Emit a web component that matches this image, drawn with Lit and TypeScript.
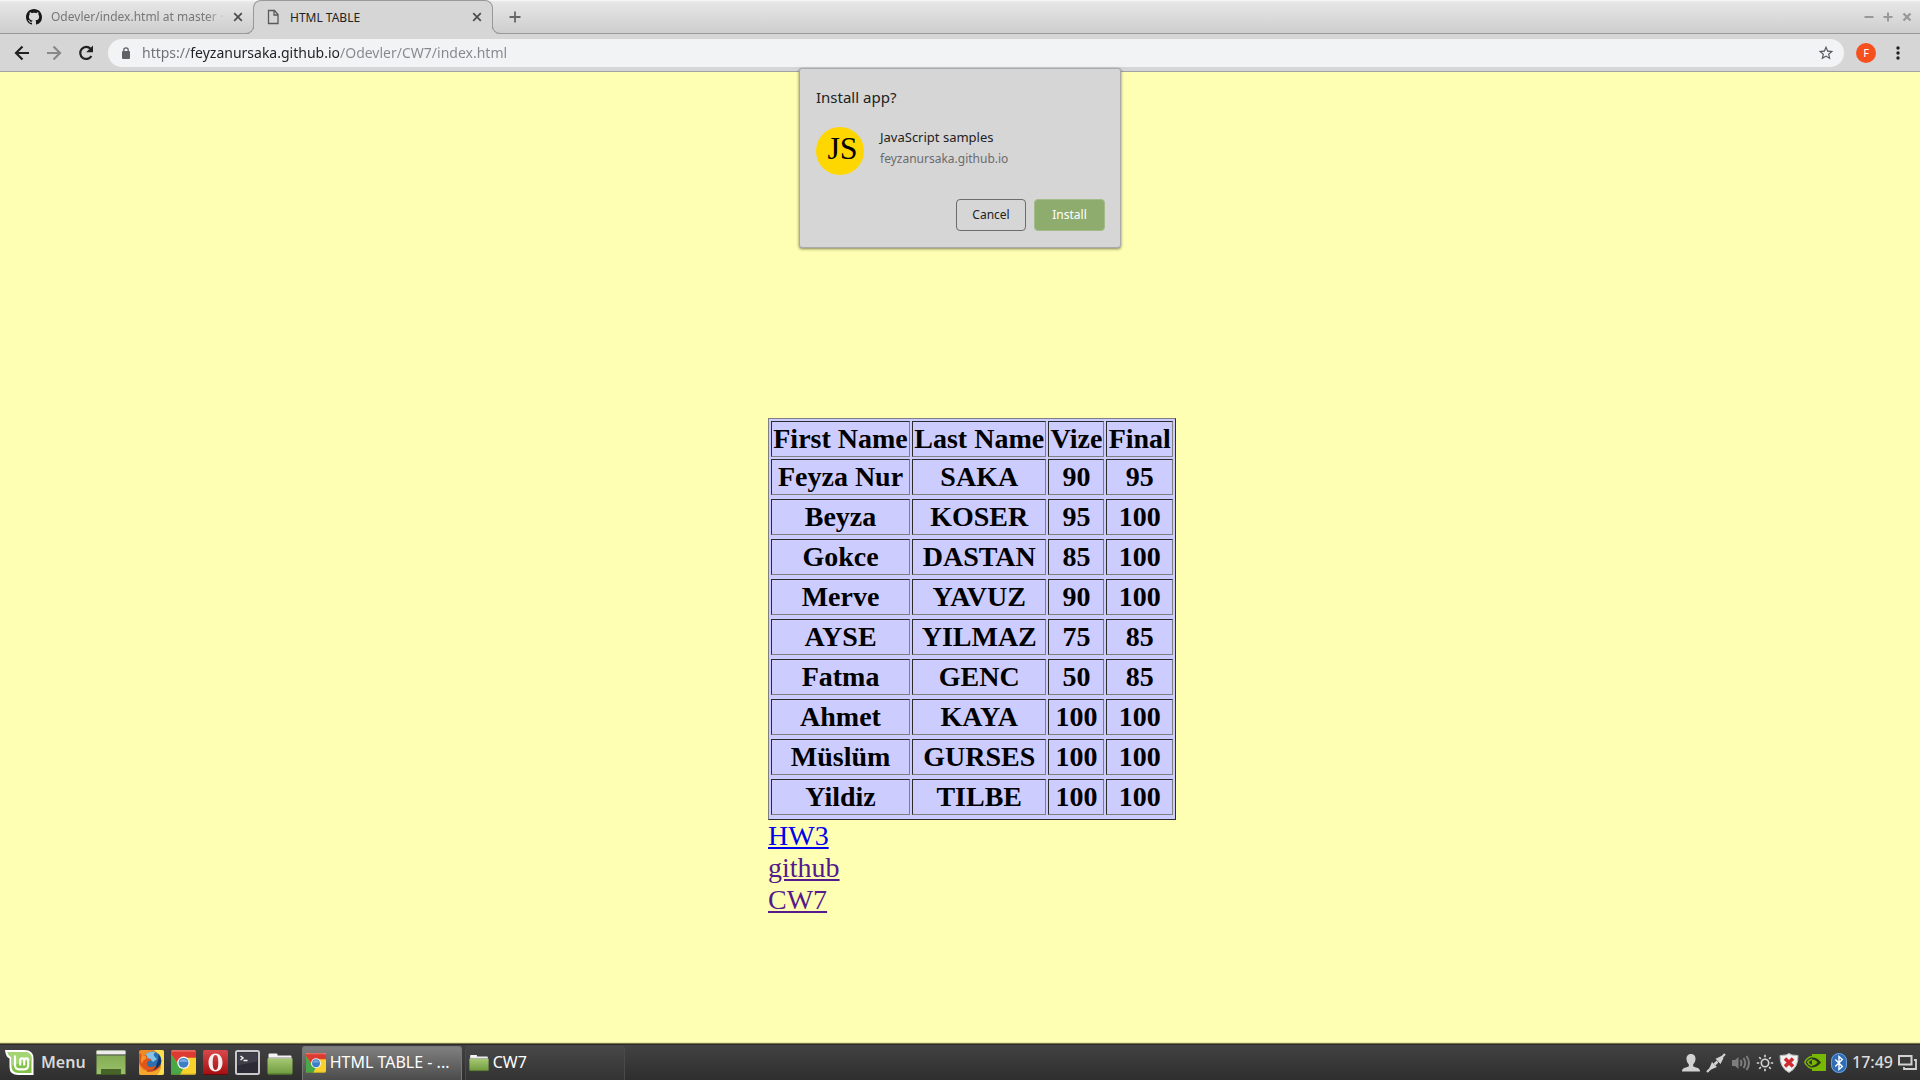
import { LitElement, html, css, svg } from "lit";
import { customElement } from "lit/decorators.js";

const students: Array<[string, string, number, number]> = [
  ["Feyza Nur", "SAKA", 90, 95],
  ["Beyza", "KOSER", 95, 100],
  ["Gokce", "DASTAN", 85, 100],
  ["Merve", "YAVUZ", 90, 100],
  ["AYSE", "YILMAZ", 75, 85],
  ["Fatma", "GENC", 50, 85],
  ["Ahmet", "KAYA", 100, 100],
  ["Müslüm", "GURSES", 100, 100],
  ["Yildiz", "TILBE", 100, 100],
];

const icon = (size: number, box: string, body: unknown, height = size) =>
  html`<svg width=${size} height=${height} viewBox=${box} aria-hidden="true">${body}</svg>`;

const cross = icon(10, "0 0 10 10", svg`<path d="M1.2 1.2 8.8 8.8M8.8 1.2 1.2 8.8" stroke="#4c4c4c" stroke-width="1.7" fill="none"/>`);

const octocat = icon(16, "0 0 16 16", svg`<path fill="#191717" d="M8 0C3.58 0 0 3.58 0 8c0 3.54 2.29 6.53 5.47 7.59.4.07.55-.17.55-.38 0-.19-.01-.82-.01-1.49-2.01.37-2.53-.49-2.69-.94-.09-.23-.48-.94-.82-1.13-.28-.15-.68-.52-.01-.53.63-.01 1.08.58 1.23.82.72 1.21 1.87.87 2.33.66.07-.52.28-.87.51-1.07-1.78-.2-3.64-.89-3.64-3.95 0-.87.31-1.59.82-2.15-.08-.2-.36-1.02.08-2.12 0 0 .67-.21 2.2.82.64-.18 1.32-.27 2-.27s1.36.09 2 .27c1.53-1.04 2.2-.82 2.2-.82.44 1.1.16 1.92.08 2.12.51.56.82 1.27.82 2.15 0 3.07-1.87 3.75-3.65 3.95.29.25.54.73.54 1.48 0 1.07-.01 1.93-.01 2.2 0 .21.15.46.55.38A8.01 8.01 0 0 0 16 8c0-4.42-3.58-8-8-8z"/>`);

const page = icon(16, "0 0 16 16", svg`<path d="M3.500 1.500h6l3.500 4v9H3.500zM9 1.500v4.500h4" fill="none" stroke="#5a5a5a" stroke-width="1.300"/>`);

const chrome = (size: number) => icon(size, "0 0 24 24", svg`
  <rect width="24" height="24" rx="2.500" fill="#f8d12b"/>
  <path d="M0 3a3 3 0 0 1 3-3h18a3 3 0 0 1 3 3v4.500H12L7 14 0 4z" fill="#dd3b31"/>
  <path d="M0 3.500 7 14l5 3.500L8.500 24H2.500A2.500 2.500 0 0 1 0 21.500z" fill="#48a845"/>
  <path d="M1 .9h22" stroke="#f09a90" stroke-width=".8"/>
  <circle cx="12" cy="12.300" r="6" fill="#f3f3f3"/>
  <circle cx="12" cy="12.300" r="4.700" fill="#3c7fc6"/>
  <path d="M8 11.500a4.200 4.200 0 0 1 8 0z" fill="#78aade"/>
  <path d="M.5 23.300h23" stroke="#7a6e2c" stroke-opacity=".6"/>`);

const folder = (w: number, h: number) => icon(w, "0 0 26 22", svg`
  <defs><linearGradient id="fg" x2="0" y2="1"><stop stop-color="#a6c873"/><stop offset="1" stop-color="#6f9a3d"/></linearGradient></defs>
  <path d="M1.500 6V1.500Q1.500.5 2.500.5h7q1 0 1 1v1h13q1 0 1 1V6z" fill="#f4f4f4"/>
  <path d="M1 5h24" stroke="#8c8c8c"/>
  <path d="M.5 5.500h25V20q0 1.500-1.500 1.500H2Q.5 21.500.5 20z" fill="url(#fg)"/>
  <path d="M1 21h24" stroke="#4d6e29"/>`, h);

const mint = icon(29, "0 0 29 27", svg`
  <path d="M0 1h19.500Q28.500 1 28.500 9.500V26H13.500Q4.500 26 4.500 18V9.500Q.8 8.500 0 1z" fill="#fff"/>
  <path d="M2.500 3h17q7 0 7 6.500V24h-13q-7 0-7-6.500V8Q3.500 7 2.500 3z" fill="#83c048"/>
  <path d="M2.500 3h17q7 0 7 6.500V11L6.500 17V8Q3.500 7 2.500 3z" fill="#a3d573"/>
  <path d="M10 6.500V16q0 4.300 4.300 4.300h4.900q4 0 4-4.300v-4.500q0-2.200-2-2.200t-2 2.200V16.500M19.200 11.500q0-2.200-2-2.200t-2 2.200V16.500" fill="none" stroke="#fff" stroke-width="2.200"/>`, 27);

const desktop = icon(30, "0 0 30 25", svg`
  <defs><linearGradient id="dg" x2="0" y2="1"><stop stop-color="#7fa850"/><stop offset="1" stop-color="#98c168"/></linearGradient></defs>
  <rect x=".5" y=".5" width="29" height="24" fill="url(#dg)"/>
  <rect x=".5" y=".5" width="29" height="4" rx="1" fill="#ececec"/>
  <path d="M.5 5h29" stroke="#555"/>
  <rect x="5" y="19" width="20" height="5.500" fill="#466428"/>
  <path d="M.5 24.500h29" stroke="#3f5a24"/>`, 25);

const firefox = icon(25, "0 0 25 25", svg`
  <rect width="25" height="25" rx="2" fill="#ee8a22"/>
  <path d="M15 0h8q2 0 2 2v21q0 2-2 2h-5q5-6 4-13-1-8-7-12z" fill="#fae04e"/>
  <circle cx="13.500" cy="10.500" r="9" fill="#2c70b0"/>
  <path d="M6 5Q10 .5 17 2q-3 1-2 4l3 3-4 3-3-3-4 2z" fill="#83c4e6"/>
  <path d="M19.500 4q5.500 8-.5 14-5 4.500-12 1.500 9 0 11-6 2-4 1.500-9.500z" fill="#15346a"/>
  <path d="M0 3q2 0 3 2.500L7 5q2 1 1 3 3.500 0 4.500 2-3.500.5-4.500 3 0 3 3 4 3.500.5 6.500-2-2 6.500-9 5.500-6-2-8.500-8z" fill="#e0561b"/>
  <path d="M0 15q3 6.500 10 6.500 8 0 12-6 0 5-5 9.500H2q-2 0-2-2z" fill="#f5a62f"/>
  <path d="M3 5q-2 5 0 9 1-5 5-5-2-1-1-3z" fill="#f2962b"/>
  <path d="M8 21q8 1 13-5" fill="none" stroke="#c7481a" stroke-width="1.300"/>`);

const opera = icon(25, "0 0 25 25", svg`
  <defs><linearGradient id="og" x2="0" y2="1"><stop stop-color="#d9484a"/><stop offset="1" stop-color="#a50d10"/></linearGradient></defs>
  <rect width="25" height="25" rx="2" fill="url(#og)"/>
  <path fill-rule="evenodd" d="M12.500 3.500c4.500 0 7 4 7 9s-2.500 9-7 9-7-4-7-9 2.500-9 7-9zm0 1.500c-2 0-2.800 3-2.800 7.500s.8 7.500 2.800 7.500 2.800-3 2.800-7.500S14.500 5 12.500 5z" fill="#f5f0f0"/>
  <path d="M.5 24.500h24" stroke="#630a0b"/>`);

const terminal = icon(25, "0 0 25 25", svg`
  <rect x="1" y="1" width="23" height="23" rx="1.500" fill="#2d2b35" stroke="#c9c9cb" stroke-width="2"/>
  <path d="M2.500 2.500h20v9l-20 4z" fill="#403e48"/>
  <path d="M5.500 6 8 8 5.500 10M8.500 10.500h4" fill="none" stroke="#f4f4f4" stroke-width="1.500"/>`);

const person = icon(20, "0 0 20 20", svg`<path fill="#d2d2d2" d="M10 1c3 0 4.700 2.200 4.500 5-.1 2.300-1 4.200-2.300 5.200v2c1.500 1.300 6.800 1.300 6.800 4.800v.5H1V18c0-3.500 5.300-3.500 6.800-4.800v-2C6.500 10.200 5.600 8.300 5.500 6 5.300 3.200 7 1 10 1z"/>`);
const plug = icon(20, "0 0 20 20", svg`<path d="M1 19l5-5M14 6l5-5" stroke="#d2d2d2" stroke-width="2.200"/><path d="M3.500 15 6 9l5 5-6 2.500zM9.500 5.800 15.500 3l2 2-3 6z" fill="#d2d2d2"/><path d="M8.500 11.500l3-3" stroke="#d2d2d2" stroke-width="2.600"/>`);
const sound = icon(20, "0 0 20 20", svg`<path d="M1 7h3l3.500-3v12L4 13H1z" fill="#7d7d7d"/><path d="M9.500 7q2 3 0 6M12.500 5q3.500 5 0 10M15.500 3q5 7 0 14" fill="none" stroke="#7d7d7d" stroke-width="2"/>`);
const sun = icon(18, "0 0 18 18", svg`<circle cx="9" cy="9" r="3.700" fill="none" stroke="#d6d6d6" stroke-width="1.600"/><path d="M9 .8v2.400M9 14.800v2.400M.8 9h2.400M14.800 9h2.400M3.200 3.200l1.700 1.700M13.100 13.100l1.700 1.700M14.800 3.200l-1.700 1.700M4.900 13.100l-1.700 1.700" stroke="#d6d6d6" stroke-width="1.600"/>`);
const shield = icon(20, "0 0 20 20", svg`<path d="M10 .5 13 2l6 .5q.5 12-9 17-9.500-5-9-17L7 2z" fill="#f1f1f1" stroke="#b9b9b9"/><path d="m6 5.500 8 8M14 5.500l-8 8" stroke="#cf2b30" stroke-width="3.600"/>`);
const nvidia = icon(22, "0 0 22 17", svg`
  <path d="M8 0h14v17H8z" fill="#76b900"/>
  <path d="M8 3.500c5.500-.5 9 5 9 5s-3.500 5-9 5z" fill="#2d3420"/>
  <path d="M8 5.500c3.500-.3 5.500 3 5.500 3s-2.500 3.200-5.500 3.200z" fill="#76b900"/>
  <path d="M8 2.500C3.500 2.800.8 8 .8 8s1.700 5.500 7.200 6.500M8 5.300C5.300 5.600 3.800 8 3.800 8s1 3 4.200 3.800M8 8q2-.5 2.500 1.500-1 1.300-2.500.5" fill="none" stroke="#76b900" stroke-width="1.500"/>`, 17);
const bluetooth = icon(16, "0 0 16 20", svg`<rect width="16" height="20" rx="8" fill="#2f6db5"/><rect x=".5" y=".5" width="15" height="19" rx="7.500" fill="none" stroke="#6b9fd6"/><path d="m4.300 6.500 7 7L8 16.500v-13l3.300 3-7 7" fill="none" stroke="#fff" stroke-width="1.400"/>`, 20);
const windows = icon(19, "0 0 19 15", svg`<path d="M1 1h12.500v8.500H1z" fill="none" stroke="#d2d2d2" stroke-width="2"/><path d="M16 5h2v9H6v-2" fill="none" stroke="#d2d2d2" stroke-width="1.800"/>`, 15);

@customElement("browser-chrome")
class BrowserChrome extends LitElement {
  static styles = css`
    :host { display: block; font-family: "Noto Sans", "Open Sans", sans-serif; font-size: 12px; color: #222; }
    svg { display: block; flex: none; }
    button { font: inherit; color: inherit; background: none; border: 0; padding: 0; display: flex; align-items: center; justify-content: center; }
    .strip { display: flex; height: 33px; padding-left: 13px; border-bottom: 1px solid #999; background: linear-gradient(#fafafa 0, #e6e6e6 2px, #cecece 33px); }
    .tab { position: relative; display: flex; align-items: center; width: 240px; box-sizing: border-box; padding: 0 9px 0 13px; }
    .tab.active { background: #d6d6d6; border: 1px solid #999; border-bottom: 0; border-radius: 8px 8px 0 0; margin-bottom: -1px; padding: 0 9px 1px 11px; }
    .tab.active::before, .tab.active::after { content: ""; position: absolute; bottom: 0; width: 7px; height: 7px; border-bottom: 1px solid #999; }
    .tab.active::before { right: 100%; border-right: 1px solid #999; border-bottom-right-radius: 8px; box-shadow: 3px 3px 0 #d6d6d6; }
    .tab.active::after { left: 100%; border-left: 1px solid #999; border-bottom-left-radius: 8px; box-shadow: -3px 3px 0 #d6d6d6; }
    .pick { flex: 1; min-width: 0; justify-content: flex-start; gap: 9px; height: 100%; }
    .title { flex: 1; text-align: left; overflow: hidden; white-space: nowrap; }
    .dim { color: #777; mask-image: linear-gradient(90deg, #000 calc(100% - 20px), transparent); }
    .close { width: 12px; height: 16px; margin-left: 12px; }
    .close.tight { margin-left: 6px; }
    .new { width: 28px; margin-left: 8px; }
    .controls { display: flex; gap: 3px; margin-left: auto; padding-right: 5px; }
    .controls button { width: 16px; }
    .bar { display: flex; align-items: center; height: 37px; background: #d6d6d6; border-bottom: 1px solid #a3a3a3; }
    .nav { display: flex; gap: 12px; padding: 0 12px; }
    .omni { flex: 1; display: flex; align-items: center; height: 28px; border-radius: 14px; background: #f1f3f4; padding: 0 10px 0 14px; gap: 12px; }
    .url { flex: 1; min-width: 0; border: 0; padding: 0; outline: 0; height: 24px; font: inherit; font-size: 14px; color: #7b8084; -webkit-text-fill-color: transparent; background: linear-gradient(90deg, #6c7074 48px, #202124 48px 197px, #84888c 197px); -webkit-background-clip: text; background-clip: text; }
    .avatar { width: 20px; height: 20px; border-radius: 50%; background: #f4511e; color: #fff; font-size: 11px; margin-left: 12px; }
    .more { width: 20px; height: 24px; margin: 0 12px; }
  `;
  render() {
    return html`
      <div class="strip">
        <div class="tab">
          <button class="pick">${octocat}<span class="title dim">Odevler/index.html at master · f</span></button>
          <button class="close tight" aria-label="Close tab">${cross}</button>
        </div>
        <div class="tab active">
          <button class="pick">${page}<span class="title">HTML TABLE</span></button>
          <button class="close" aria-label="Close tab">${cross}</button>
        </div>
        <button class="new" aria-label="New tab">${icon(12, "0 0 12 12", svg`<path d="M6 .5v11M.5 6h11" stroke="#666" stroke-width="1.800"/>`)}</button>
        <div class="controls">
          <button aria-label="Minimize">${icon(10, "0 0 10 10", svg`<path d="M.5 5h9" stroke="#999" stroke-width="2"/>`)}</button>
          <button aria-label="Maximize">${icon(10, "0 0 10 10", svg`<path d="M.5 5h9M5 .5v9" stroke="#999" stroke-width="2"/>`)}</button>
          <button aria-label="Close window">${icon(10, "0 0 10 10", svg`<path d="M1.500 1.500l7 7M8.500 1.500l-7 7" stroke="#999" stroke-width="2.400"/>`)}</button>
        </div>
      </div>
      <div class="bar">
        <div class="nav">
          <button aria-label="Back">${icon(20, "0 0 20 20", svg`<path d="M17 10H4.500M10.500 3.500 4 10l6.500 6.500" fill="none" stroke="#222" stroke-width="2.200"/>`)}</button>
          <button aria-label="Forward">${icon(20, "0 0 20 20", svg`<path d="M3 10h12.500M9.500 3.500 16 10l-6.500 6.500" fill="none" stroke="#888" stroke-width="2.200"/>`)}</button>
          <button aria-label="Reload">${icon(20, "0 0 20 20", svg`<path d="M15.400 13a6 6 0 1 1-.8-7.200" fill="none" stroke="#222" stroke-width="2.200"/><path d="M17 2.500v6.800h-6.800z" fill="#222"/>`)}</button>
        </div>
        <div class="omni">
          ${icon(8, "0 0 8 12", svg`<rect y="4" width="8" height="8" rx="1" fill="#5f6368"/><path d="M1.800 5V3a2.200 2.200 0 0 1 4.400 0v2" fill="none" stroke="#5f6368" stroke-width="1.300"/>`, 12)}
          <input class="url" aria-label="Address" spellcheck="false" value="https://feyzanursaka.github.io/Odevler/CW7/index.html">
          <button aria-label="Bookmark">${icon(16, "1 1 22 22", svg`<path fill="#55585c" d="m22 9.240-7.190-.62L12 2 9.190 8.630 2 9.240l5.460 4.730L5.820 21 12 17.270 18.180 21l-1.630-7.030zM12 15.400l-3.760 2.270 1-4.280-3.320-2.880 4.380-.38L12 6.100l1.710 4.040 4.380.38-3.320 2.880 1 4.280z"/>`)}</button>
        </div>
        <button class="avatar">F</button>
        <button class="more" aria-label="Menu">${icon(4, "0 0 4 14", svg`<g fill="#222"><circle cx="2" cy="2" r="1.700"/><circle cx="2" cy="7" r="1.700"/><circle cx="2" cy="12" r="1.700"/></g>`, 14)}</button>
      </div>`;
  }
}

@customElement("install-dialog")
class InstallDialog extends LitElement {
  static styles = css`
    :host { display: block; box-sizing: border-box; width: 322px; padding: 16px 16px 16px; background: #d6d6d6; border: 1px solid #aaa; border-radius: 3px; box-shadow: 0 1px 3px rgba(0, 0, 0, .5); font-family: "Noto Sans", "Open Sans", sans-serif; font-size: 12px; color: #222; }
    .head { margin: 0; font-size: 15px; font-weight: 400; line-height: 24px; }
    .app { display: flex; gap: 16px; margin-top: 18px; }
    .logo { display: grid; place-items: center; width: 48px; height: 48px; border-radius: 50%; background: #ffd700; color: #000; font: 32px/48px "Liberation Serif", serif; }
    .logo span { padding: 0 0 6px 5px; line-height: 42px; }
    .name { font-size: 13px; line-height: 21px; }
    .site { line-height: 21px; color: #6b6b6b; }
    .actions { display: flex; justify-content: flex-end; gap: 8px; margin: 24px -1px 0 0; }
    button { font: inherit; height: 32px; width: 70px; border-radius: 4px; border: 1px solid #6c6c6c; background: none; color: #222; padding: 0 0 2px; }
    .primary { background: #8fac6f; border-color: #a3bb89; color: #fff; width: 71px; }
  `;
  render() {
    return html`
      <h2 class="head">Install app?</h2>
      <div class="app">
        <div class="logo"><span>JS</span></div>
        <div><div class="name">JavaScript samples</div><div class="site">feyzanursaka.github.io</div></div>
      </div>
      <div class="actions"><button>Cancel</button><button class="primary">Install</button></div>`;
  }
}

@customElement("grade-page")
class GradePage extends LitElement {
  static styles = css`
    :host { display: block; padding: 346px 0 0 40%; background: #ffffb3; font-family: "Liberation Serif", serif; font-size: 28px; line-height: 32px; color: #000; }
    table { width: 408px; background: #ccccff; border: 1px solid; border-color: #808080 #2c2c2c #2c2c2c #808080; border-spacing: 2px; text-align: center; font-weight: 700; }
    th, td { padding: 1px; border: 1px solid; border-color: #2c2c2c #808080 #808080 #2c2c2c; }
    .link { display: table; color: #551a8b; }
    .fresh { color: #0000ee; }
  `;
  render() {
    return html`
      <table>
        <tr><th>First Name</th><th>Last Name</th><th>Vize</th><th>Final</th></tr>
        ${students.map((s) => html`<tr>${s.map((v) => html`<td>${v}</td>`)}</tr><tr></tr>`)}
      </table>
      <a class="link fresh" href="#hw3">HW3</a>
      <a class="link" href="#github">github</a>
      <a class="link" href="#cw7">CW7</a>`;
  }
}

@customElement("task-bar")
class TaskBar extends LitElement {
  static styles = css`
    :host { display: flex; align-items: center; height: 35px; border-top: 1px solid #2a2a2a; background: linear-gradient(#424242, #2e2e2e); box-shadow: 0 -1px 1px rgba(60, 60, 30, .7); position: relative; font-family: "Noto Sans", "Open Sans", sans-serif; font-size: 16px; color: #fff; }
    svg { display: block; flex: none; }
    span { padding-bottom: 2px; }
    button { font: inherit; color: inherit; background: none; border: 0; padding: 0; display: flex; align-items: center; }
    .menu { gap: 7px; padding-left: 5px; font-weight: 600; color: #d8d8d8; }
    .show { margin-left: 10px; }
    .launch { display: flex; align-items: flex-end; gap: 7px; margin: 0 9px 0 13px; }
    .tasks { display: flex; gap: 3px; align-self: stretch; padding-top: 1px; }
    .task { width: 160px; gap: 4px; padding: 0 0 2px 3px; border: 1px solid #4a4a4a; border-bottom: 0; border-radius: 3px 3px 0 0; background: linear-gradient(#474747, #333); }
    .task.active { background: linear-gradient(#808080, #4b4b4b); border-color: #777; }
    .tray { display: flex; align-items: center; gap: 5px; margin-left: auto; padding-right: 3px; color: #dcdcdc; }
    .clock { font-weight: 500; }
  `;
  render() {
    return html`
      <button class="menu">${mint}<span>Menu</span></button>
      <button class="show" aria-label="Show desktop">${desktop}</button>
      <div class="launch">
        <button aria-label="Firefox">${firefox}</button>
        <button aria-label="Chrome">${chrome(25)}</button>
        <button aria-label="Opera">${opera}</button>
        <button aria-label="Terminal">${terminal}</button>
        <button aria-label="Files">${folder(26, 22)}</button>
      </div>
      <div class="tasks">
        <button class="task active">${chrome(20)}<span>HTML TABLE - ...</span></button>
        <button class="task">${folder(20, 18)}<span>CW7</span></button>
      </div>
      <div class="tray">
        ${person}${plug}${sound}${sun}${shield}${nvidia}${bluetooth}
        <span class="clock">17:49</span>${windows}
      </div>`;
  }
}

@customElement("app-root")
class AppRoot extends LitElement {
  static styles = css`
    :host { display: flex; flex-direction: column; min-height: 100vh; position: relative; }
    .page { flex: 1; }
    .popup { position: absolute; top: 68px; left: calc(50% - 161px); }
  `;
  render() {
    return html`
      <browser-chrome></browser-chrome>
      <grade-page class="page"></grade-page>
      <task-bar></task-bar>
      <install-dialog class="popup" role="dialog"></install-dialog>`;
  }
}
